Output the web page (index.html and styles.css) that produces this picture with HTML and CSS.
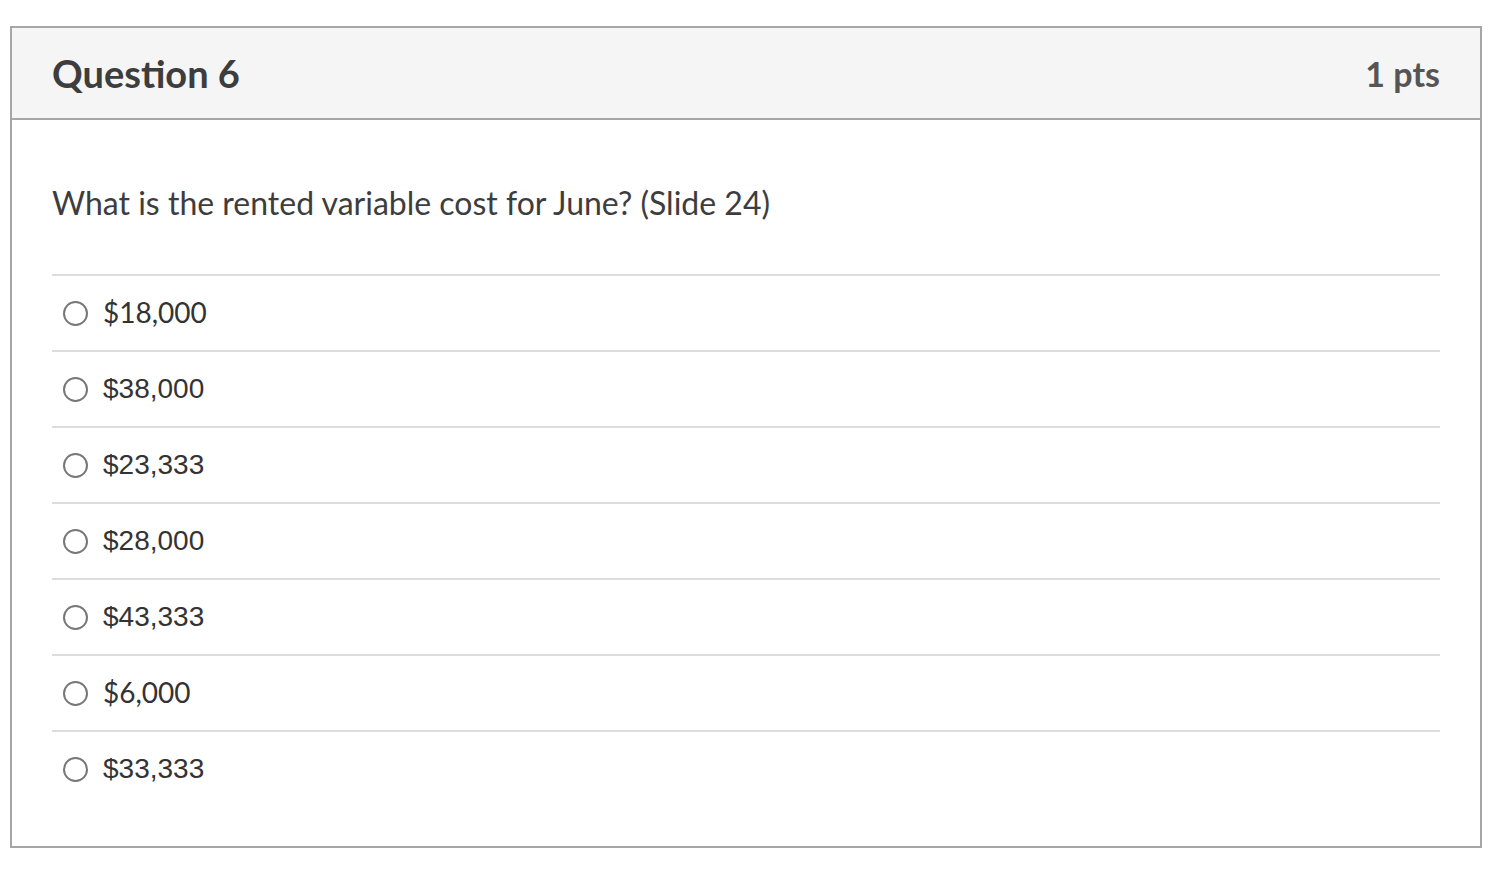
FILE: index.html
```html
<!DOCTYPE html>
<html>
<head>
<meta charset="utf-8">
<link rel="stylesheet" href="styles.css">
</head>
<body>
<div class="quiz">
  <div class="quiz-header">
    <h2 class="quiz-title">Question 6</h2>
    <div class="quiz-points">1 pts</div>
  </div>
  <div class="quiz-body">
    <p class="question">What is the rented variable cost for June? (Slide 24)</p>
    <ul class="answers">
      <li class="answer"><span class="radio"></span><span class="label">$18,000</span></li>
      <li class="answer"><span class="radio"></span><span class="label alt">$38,000</span></li>
      <li class="answer"><span class="radio"></span><span class="label alt">$23,333</span></li>
      <li class="answer"><span class="radio"></span><span class="label alt">$28,000</span></li>
      <li class="answer"><span class="radio"></span><span class="label alt">$43,333</span></li>
      <li class="answer"><span class="radio"></span><span class="label">$6,000</span></li>
      <li class="answer"><span class="radio"></span><span class="label alt">$33,333</span></li>
    </ul>
  </div>
</div>
</body>
</html>
```
FILE: styles.css
```css
html, body {
  margin: 0;
  padding: 0;
  background: #fff;
}
body {
  font-family: Lato, "Liberation Sans", sans-serif;
  color: #333;
}
.quiz {
  box-sizing: border-box;
  margin: 26px 0 0 10px;
  width: 1472px;
  height: 822px;
  border: 2px solid #a6a6a6;
}
.quiz-header {
  box-sizing: border-box;
  height: 92px;
  background: #f5f5f5;
  border-bottom: 2px solid #a6a6a6;
  padding: 0 40px;
  display: flex;
  align-items: center;
  justify-content: space-between;
}
.quiz-title {
  margin: 0;
  font-size: 38px;
  font-weight: 700;
  color: #3d3d3d;
}
.quiz-points {
  font-size: 34px;
  font-weight: 700;
  color: #555;
}
.quiz-body {
  padding: 0 40px;
}
.question {
  margin: 63px 0 51px;
  font-size: 32px;
  line-height: 40px;
  color: #3d3d3d;
}
.answers {
  list-style: none;
  margin: 0;
  padding: 0;
}
.answer {
  box-sizing: border-box;
  height: 76px;
  border-top: 2px solid #dddddd;
  display: flex;
  align-items: center;
  padding-left: 11px;
}
.radio {
  box-sizing: border-box;
  width: 25px;
  height: 25px;
  border: 2px solid #777;
  border-radius: 50%;
  margin-right: 15px;
  flex: none;
}
.label {
  font-size: 28px;
  line-height: 34px;
  padding-bottom: 3px;
  color: #333;
}
.label.alt {
  font-family: "Liberation Sans", Arial, sans-serif;
  padding-bottom: 1px;
}
```
